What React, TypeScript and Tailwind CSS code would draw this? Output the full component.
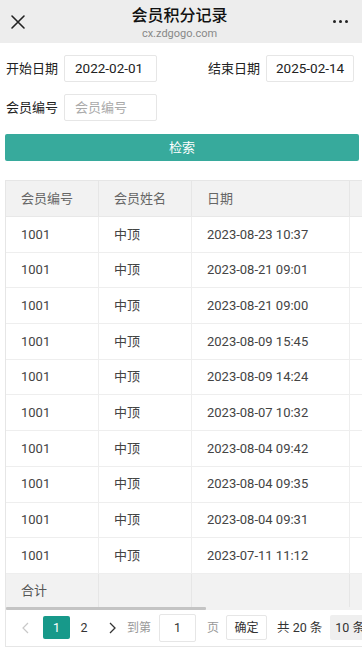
import React from "react";

const rows = [
  "2023-08-23 10:37",
  "2023-08-21 09:01",
  "2023-08-21 09:00",
  "2023-08-09 15:45",
  "2023-08-09 14:24",
  "2023-08-07 10:32",
  "2023-08-04 09:42",
  "2023-08-04 09:35",
  "2023-08-04 09:31",
  "2023-07-11 11:12",
];

const font = { fontFamily: 'Roboto, "Noto Sans CJK SC", sans-serif' };

export default function App() {
  return (
    <div className="w-[362px] h-[651px] overflow-hidden bg-white text-[#333]" style={font}>
      {/* top bar */}
      <div className="h-[43px] bg-[#ededed] flex items-center justify-between px-[9px]">
        <svg width="16" height="16" viewBox="0 0 16 16" className="ml-[1px]">
          <path d="M2 2 L14 14 M14 2 L2 14" stroke="#222" strokeWidth="1.6" strokeLinecap="round" />
        </svg>
        <div className="flex flex-col items-center leading-none">
          <div className="text-[16px] font-medium text-[#111] mt-[3px]">会员积分记录</div>
          <div className="text-[11px] text-[#888] mt-[4px]">cx.zdgogo.com</div>
        </div>
        <div className="flex gap-[3px] mr-[5px]">
          <span className="w-[3px] h-[3px] rounded-full bg-[#222]" />
          <span className="w-[3px] h-[3px] rounded-full bg-[#222]" />
          <span className="w-[3px] h-[3px] rounded-full bg-[#222]" />
        </div>
      </div>

      {/* form */}
      <div className="px-[5px] pt-[12px]">
        <div className="flex items-center h-[27px]">
          <span className="w-[59px] pl-[1px] text-[13px] text-[#222]">开始日期</span>
          <div className="w-[93px] h-[27px] border border-[#e6e6e6] rounded-[2px] flex items-center pl-[10px] text-[13.5px] text-[#222]">
            2022-02-01
          </div>
          <span className="ml-[51px] w-[58px] text-[13px] text-[#222]">结束日期</span>
          <div className="w-[88px] h-[27px] border border-[#e6e6e6] rounded-[2px] flex items-center pl-[9px] text-[13.5px] text-[#222]">
            2025-02-14
          </div>
        </div>
        <div className="flex items-center h-[27px] mt-[12px]">
          <span className="w-[59px] pl-[1px] text-[13px] text-[#222]">会员编号</span>
          <div className="w-[93px] h-[27px] border border-[#e6e6e6] rounded-[2px] flex items-center pl-[10px] text-[13px] text-[#aaa]">
            会员编号
          </div>
        </div>
        <div className="mt-[13px] h-[27px] w-[354px] bg-[#37aa9c] rounded-[2px] flex items-center justify-center text-white text-[13px]">
          检索
        </div>
      </div>

      {/* table */}
      <div className="ml-[5px] mt-[19px] w-[420px] border-l border-t border-[#e6e6e6]">
        <div className="flex h-[36px] bg-[#f2f2f2] border-b border-[#e8e8e8] text-[13px] text-[#666]">
          <div className="w-[93px] border-r border-[#e6e6e6] flex items-center pl-[15px]">会员编号</div>
          <div className="w-[93px] border-r border-[#e6e6e6] flex items-center pl-[15px]">会员姓名</div>
          <div className="w-[158px] border-r border-[#e6e6e6] flex items-center pl-[15px]">日期</div>
          <div className="flex-1" />
        </div>
        {rows.map((d, i) => (
          <div key={i} className="flex h-[35.7px] border-b border-[#eeeeee] text-[13px] text-[#444]">
            <div className="w-[93px] border-r border-[#eeeeee] flex items-center pl-[15px]">1001</div>
            <div className="w-[93px] border-r border-[#eeeeee] flex items-center pl-[15px]">中顶</div>
            <div className="w-[158px] border-r border-[#eeeeee] flex items-center pl-[15px]">{d}</div>
            <div className="flex-1" />
          </div>
        ))}
        <div className="flex h-[33px] bg-[#f2f2f2] text-[13px] text-[#555]">
          <div className="w-[93px] border-r border-[#e6e6e6] flex items-center pl-[15px]">合计</div>
          <div className="w-[93px] border-r border-[#e6e6e6]" />
          <div className="w-[158px] border-r border-[#e6e6e6]" />
          <div className="flex-1" />
        </div>
        <div className="h-[3px] bg-[#f2f2f2]">
          <div className="w-[200px] h-[3px] bg-[#c4c4c4] rounded-[1px]" />
        </div>

        {/* pagination */}
        <div className="h-[37px] border-b border-[#e6e6e6] flex items-center text-[12.5px]">
          <span className="ml-[15px]">
            <svg width="10" height="14" viewBox="0 0 10 14">
              <path d="M7 2 L2 7 L7 12" fill="none" stroke="#c8c8c8" strokeWidth="1.2" />
            </svg>
          </span>
          <div className="ml-[12px] w-[27px] h-[23px] bg-[#17998a] rounded-[2px] text-white flex items-center justify-center">1</div>
          <div className="ml-[9px] w-[10px] text-[#333] text-center">2</div>
          <span className="ml-[18px]">
            <svg width="10" height="14" viewBox="0 0 10 14">
              <path d="M3 2 L8 7 L3 12" fill="none" stroke="#333" strokeWidth="1.3" />
            </svg>
          </span>
          <span className="ml-[10px] text-[#999] text-[12px]">到第</span>
          <div className="ml-[8px] w-[37px] h-[28px] border border-[#e6e6e6] rounded-[2px] flex items-center justify-center text-[#333]">1</div>
          <span className="ml-[11px] text-[#999] text-[12px]">页</span>
          <div className="ml-[7px] w-[41px] h-[25px] border border-[#e6e6e6] rounded-[2px] flex items-center justify-center text-[#333] text-[12px]">确定</div>
          <span className="ml-[10px] text-[#333] text-[12.5px]">共 20 条</span>
          <div className="ml-[8px] h-[25px] pl-[5px] pr-[10px] bg-[#efefef] rounded-[2px] flex items-center text-[#333] whitespace-nowrap">10 条/页</div>
        </div>
      </div>
    </div>
  );
}
